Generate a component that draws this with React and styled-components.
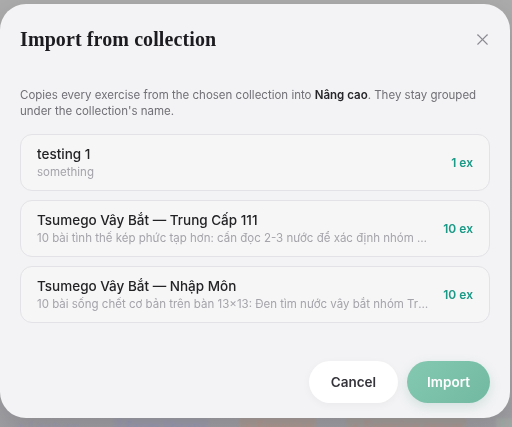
import React from 'react';
import styled, { createGlobalStyle } from 'styled-components';
import { X } from 'lucide-react';

const GlobalStyle = createGlobalStyle`
    html, body {
        margin: 0;
        padding: 0;
        height: 100%;
        background: #a9a9aa;
        font-family: Inter, "Noto Sans", sans-serif;
        overflow: hidden;
    }
`;

const Page = styled.div`
    position: fixed;
    inset: 0;
    background: linear-gradient(180deg, #acacad 0%, #a9a9ab 85%, #a09fa4 100%);
`;

const PageToolbar = styled.div`
    position: absolute;
    left: 0;
    right: 0;
    bottom: -8px;
    display: flex;
    gap: 30px;
    padding: 0 12px;
    filter: blur(1px);
    font-size: 14px;
    white-space: nowrap;
`;

const ToolLabel = styled.span`
    color: ${p => p.$tone};
    background: ${p => p.$bg};
    padding: 0 4px;
`;

const Overlay = styled.div`
    position: fixed;
    inset: 0;
    display: flex;
    align-items: flex-start;
`;

const Dialog = styled.div`
    margin-top: 4px;
    width: 510px;
    height: 414px;
    box-sizing: border-box;
    background: #f3f3f5;
    border-radius: 26px;
    padding: 24px 20px 15px 20px;
    display: flex;
    flex-direction: column;
    box-shadow: 0 10px 30px rgba(0, 0, 0, 0.15);
`;

const Header = styled.div`
    display: flex;
    justify-content: space-between;
    align-items: center;
`;

const Title = styled.h2`
    margin: 0;
    font-family: "Liberation Serif", "DejaVu Serif", serif;
    font-weight: 700;
    font-size: 20px;
    color: #1c1b1f;
    letter-spacing: 0.1px;
`;

const CloseButton = styled.button`
    border: none;
    background: none;
    padding: 0;
    margin-right: -2px;
    color: #8b8b92;
    display: flex;
    cursor: pointer;
`;

const Description = styled.p`
    margin: 36px 0 15px;
    font-size: 11.5px;
    line-height: 16px;
    color: #707076;

    strong {
        color: #26262a;
        font-weight: 600;
    }
`;

const List = styled.div`
    display: flex;
    flex-direction: column;
    gap: 9px;
`;

const Card = styled.div`
    border: 1px solid #e3e3e7;
    border-radius: 12px;
    background: rgba(255, 255, 255, 0.25);
    height: 57px;
    box-sizing: border-box;
    padding: 0 16px;
    display: flex;
    align-items: center;
    gap: 14px;
    cursor: pointer;
`;

const CardText = styled.div`
    flex: 1;
    min-width: 0;
    display: flex;
    flex-direction: column;
    gap: 3px;
`;

const CardName = styled.div`
    font-size: 13.5px;
    color: #232326;
    font-weight: 500;
`;

const CardNote = styled.div`
    font-size: 11.5px;
    color: #a4a4aa;
    white-space: nowrap;
    overflow: hidden;
    text-overflow: ellipsis;
`;

const Count = styled.div`
    font-size: 12px;
    font-weight: 600;
    color: #1a9a86;
    white-space: nowrap;
`;

const Footer = styled.div`
    margin-top: auto;
    display: flex;
    justify-content: flex-end;
    gap: 9px;
`;

const PillButton = styled.button`
    height: 42px;
    border: none;
    border-radius: 21px;
    padding: 0 ${p => (p.$primary ? 20 : 22)}px;
    font-family: Inter, "Noto Sans", sans-serif;
    font-size: 13.5px;
    font-weight: 600;
    color: ${p => (p.$primary ? '#ffffff' : '#34343a')};
    background: ${p => (p.$primary ? 'linear-gradient(135deg, #84c8b0, #72b9a2)' : '#ffffff')};
    box-shadow: ${p => (p.$primary ? '0 4px 12px rgba(60, 140, 115, 0.18)' : '0 2px 8px rgba(0, 0, 0, 0.04)')};
    cursor: pointer;
`;

const collections = [
    { name: 'testing 1', note: 'something', count: 1 },
    {
        name: 'Tsumego Vây Bắt — Trung Cấp 111',
        note: '10 bài tình thế kép phức tạp hơn: cần đọc 2-3 nước để xác định nhóm quân bị bắt',
        count: 10,
    },
    {
        name: 'Tsumego Vây Bắt — Nhập Môn',
        note: '10 bài sống chết cơ bản trên bàn 13×13: Đen tìm nước vây bắt nhóm Trắng',
        count: 10,
    },
];

const App = () => {
    return (
        <>
            <GlobalStyle />
            <Page>
                <PageToolbar>
                    <ToolLabel $tone="#9a9ab2" $bg="transparent">+ Lecture</ToolLabel>
                    <ToolLabel $tone="#9898b8" $bg="#9d9daa">| From library</ToolLabel>
                    <ToolLabel $tone="#b3968e" $bg="#a99c98">+ Exercise</ToolLabel>
                    <ToolLabel $tone="#b3968e" $bg="#a49d9b">+ Exercise group</ToolLabel>
                    <ToolLabel $tone="#98b2a8" $bg="#a5a8a7">| From collection</ToolLabel>
                </PageToolbar>
            </Page>
            <Overlay>
                <Dialog>
                    <Header>
                        <Title>Import from collection</Title>
                        <CloseButton aria-label="Close">
                            <X size={19} strokeWidth={1.4} />
                        </CloseButton>
                    </Header>
                    <Description>
                        Copies every exercise from the chosen collection into <strong>Nâng cao</strong>. They stay grouped
                        under the collection's name.
                    </Description>
                    <List>
                        {collections.map(c => (
                            <Card key={c.name}>
                                <CardText>
                                    <CardName>{c.name}</CardName>
                                    <CardNote>{c.note}</CardNote>
                                </CardText>
                                <Count>{c.count} ex</Count>
                            </Card>
                        ))}
                    </List>
                    <Footer>
                        <PillButton>Cancel</PillButton>
                        <PillButton $primary>Import</PillButton>
                    </Footer>
                </Dialog>
            </Overlay>
        </>
    );
};

export default App;
